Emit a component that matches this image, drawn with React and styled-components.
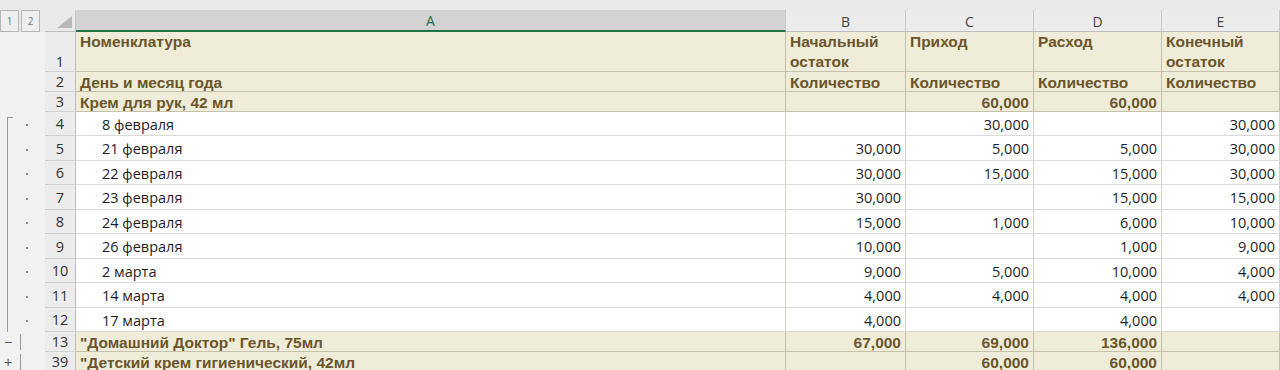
import styled, { createGlobalStyle, css } from "styled-components";

const GlobalStyle = createGlobalStyle`
  html, body { margin: 0; padding: 0; background: #fff; }
  body { font-family: "Open Sans", "Liberation Sans", sans-serif; }
`;

const COLS = "45px 31px 710px 120px 128px 128px 1fr";

const TAN = "#efedda";
const BROWN = "#6b552a";

const Sheet = styled.div`
  width: 1280px;
  overflow: hidden;
  background: #fff;
`;

const TopStrip = styled.div`
  height: 10px;
  background: #e9e9e9;
`;

const Row = styled.div`
  display: grid;
  grid-template-columns: ${COLS};
  grid-template-rows: ${(p) => p.$h}px;
  height: ${(p) => p.$h}px;
`;

const Outline = styled.div`
  position: relative;
  background: #f1f1f1;
  display: flex;
  align-items: center;
  gap: 2px;
  color: #555;
  font-size: 13px;
  ${(p) =>
    p.$bar &&
    css`
      &::before {
        content: "";
        position: absolute;
        left: 7px;
        top: ${p.$bar === "start" ? "5px" : "0"};
        bottom: 0;
        width: 1px;
        background: #9a9a9a;
      }
    `}
  ${(p) =>
    p.$bar === "start" &&
    css`
      &::after {
        content: "";
        position: absolute;
        left: 7px;
        top: 5px;
        width: 6px;
        height: 1px;
        background: #9a9a9a;
      }
    `}
`;

const Dot = styled.span`
  position: absolute;
  left: 26px;
  top: 50%;
  width: 2px;
  height: 2px;
  background: #8a8a8a;
`;

const Sign = styled.span`
  width: 14px;
  margin-left: 1px;
  text-align: center;
  font-family: "Liberation Sans", sans-serif;
  font-size: 14px;
  color: #555;
`;

const Tick = styled.span`
  position: absolute;
  left: 20px;
  top: 2px;
  bottom: 2px;
  width: 1px;
  background: #9a9a9a;
`;

const LevelButtons = styled.div`
  display: flex;
  gap: 2px;
  align-items: stretch;
  background: #e9e9e9;
  padding-right: 5px;
`;

const LevelButton = styled.div`
  width: 19px;
  border: 1px solid #b5b5b5;
  box-sizing: border-box;
  background: #efefef;
  color: #777;
  font-size: 10px;
  display: flex;
  align-items: center;
  justify-content: center;
`;

const Corner = styled.div`
  background: #e9e9e9;
  border-right: 1px solid #c6c6c6;
  border-bottom: 1px solid #bdbdbd;
  display: flex;
  align-items: flex-end;
  justify-content: flex-end;
  padding: 0 3px 3px 0;
`;

const ColHead = styled.div`
  background: ${(p) => (p.$sel ? "#d3d3d3" : "#ececec")};
  color: ${(p) => (p.$sel ? "#1f6b40" : "#444")};
  border-right: 1px solid #c9c9c9;
  border-bottom: ${(p) => (p.$sel ? "2px solid #217346" : "1px solid #bdbdbd")};
  box-sizing: border-box;
  font-size: 14px;
  display: flex;
  align-items: center;
  justify-content: center;
  padding-top: 1px;
`;

const RowHead = styled.div`
  background: #ececec;
  color: #333;
  border-right: 1px solid #bdbdbd;
  border-bottom: 1px solid #cfcfcf;
  box-sizing: border-box;
  font-size: 14.5px;
  display: flex;
  justify-content: center;
  align-items: ${(p) => (p.$bottom ? "flex-end" : "center")};
  line-height: 19px;
`;

const Cell = styled.div`
  box-sizing: border-box;
  min-height: 0;
  background: ${(p) => (p.$tan ? TAN : "#fff")};
  border-right: 1px solid ${(p) => (p.$tan ? "#c4bfa8" : "#d4d0c6")};
  border-bottom: 1px solid ${(p) => (p.$tan ? "#c6c1aa" : "#dadada")};
  color: ${(p) => (p.$tan ? BROWN : "#1e1e1e")};
  font-family: ${(p) =>
    p.$tan ? `"Liberation Sans", Arial, sans-serif` : `"Open Sans", sans-serif`};
  font-weight: ${(p) => (p.$tan ? 700 : 400)};
  font-size: ${(p) => (p.$tan ? "15.5px" : "14.5px")};
  line-height: ${(p) => (p.$top ? "20px" : "19px")};
  white-space: nowrap;
  overflow: hidden;
  display: flex;
  align-items: ${(p) => (p.$top ? "flex-start" : "center")};
  justify-content: ${(p) => (p.$num ? "flex-end" : "flex-start")};
  padding: ${(p) => (p.$top ? "0" : "1px")} 4px 0 ${(p) => (p.$indent ? 26 : 4)}px;
`;

const Wrap = styled.span`
  white-space: normal;
  width: 95px;
`;

const detail = [
  ["8 февраля", "", "30,000", "", "30,000"],
  ["21 февраля", "30,000", "5,000", "5,000", "30,000"],
  ["22 февраля", "30,000", "15,000", "15,000", "30,000"],
  ["23 февраля", "30,000", "", "15,000", "15,000"],
  ["24 февраля", "15,000", "1,000", "6,000", "10,000"],
  ["26 февраля", "10,000", "", "1,000", "9,000"],
  ["2 марта", "9,000", "5,000", "10,000", "4,000"],
  ["14 марта", "4,000", "4,000", "4,000", "4,000"],
  ["17 марта", "4,000", "", "4,000", ""],
];

const heights = [24, 25, 24, 25, 24, 25, 24, 25, 24];

const groups = [
  { n: 13, name: "\"Домашний Доктор\" Гель, 75мл", v: ["67,000", "69,000", "136,000", ""], sign: "−" },
  { n: 39, name: "\"Детский крем гигиенический, 42мл", v: ["", "60,000", "60,000", ""], sign: "+" },
];

const TanRow = ({ n, name, v, outline }) => (
  <Row $h={20}>
    {outline || <Outline />}
    <RowHead>{n}</RowHead>
    <Cell $tan>{name}</Cell>
    {v.map((x, i) => (
      <Cell key={i} $tan $num>
        {x}
      </Cell>
    ))}
  </Row>
);

export default function App() {
  return (
    <Sheet>
      <GlobalStyle />
      <TopStrip />
      <Row $h={22}>
        <LevelButtons>
          <LevelButton>1</LevelButton>
          <LevelButton>2</LevelButton>
        </LevelButtons>
        <Corner>
          <svg width="15" height="12" viewBox="0 0 15 12">
            <polygon points="15,0 15,12 0,12" fill="#b9b9b9" />
          </svg>
        </Corner>
        <ColHead $sel>A</ColHead>
        <ColHead>B</ColHead>
        <ColHead>C</ColHead>
        <ColHead>D</ColHead>
        <ColHead>E</ColHead>
      </Row>

      <Row $h={40}>
        <Outline />
        <RowHead $bottom>1</RowHead>
        <Cell $tan $top>Номенклатура</Cell>
        <Cell $tan $top>
          <Wrap>Начальный остаток</Wrap>
        </Cell>
        <Cell $tan $top>Приход</Cell>
        <Cell $tan $top>Расход</Cell>
        <Cell $tan $top>
          <Wrap>Конечный остаток</Wrap>
        </Cell>
      </Row>

      <Row $h={20}>
        <Outline />
        <RowHead>2</RowHead>
        <Cell $tan>День и месяц года</Cell>
        <Cell $tan>Количество</Cell>
        <Cell $tan>Количество</Cell>
        <Cell $tan>Количество</Cell>
        <Cell $tan>Количество</Cell>
      </Row>

      <TanRow n={3} name="Крем для рук, 42 мл" v={["", "60,000", "60,000", ""]} />

      {detail.map(([name, ...v], i) => (
        <Row key={name} $h={heights[i]}>
          <Outline $bar={i === 0 ? "start" : "mid"}>
            <Dot />
          </Outline>
          <RowHead>{4 + i}</RowHead>
          <Cell $indent>{name}</Cell>
          {v.map((x, j) => (
            <Cell key={j} $num>
              {x}
            </Cell>
          ))}
        </Row>
      ))}

      {groups.map((g) => (
        <TanRow
          key={g.n}
          {...g}
          outline={
            <Outline>
              <Sign>{g.sign}</Sign>
              <Tick />
            </Outline>
          }
        />
      ))}
    </Sheet>
  );
}
